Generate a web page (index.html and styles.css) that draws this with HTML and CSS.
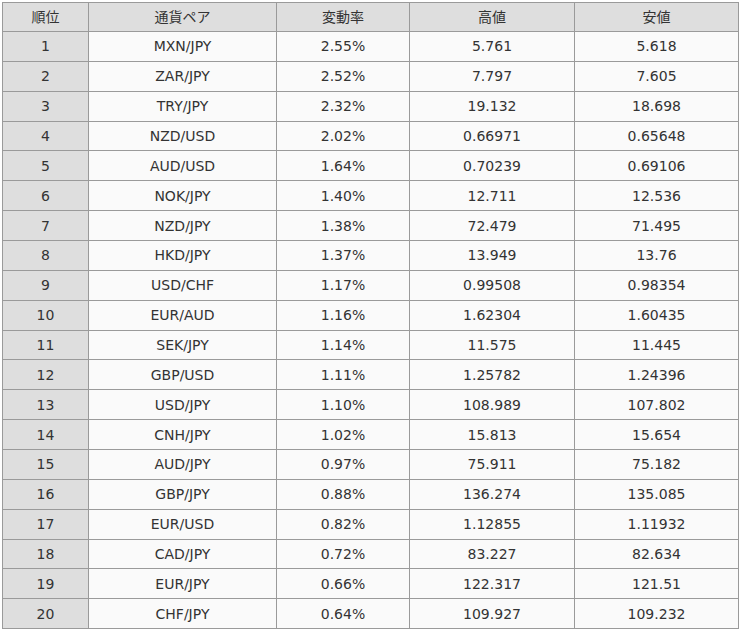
FILE: index.html
```html
<!DOCTYPE html>
<html lang="ja">
<head>
<meta charset="utf-8">
<link rel="stylesheet" href="styles.css">
</head>
<body>
<table class="rank">
<colgroup>
<col class="c1"><col class="c2"><col class="c3"><col class="c4"><col class="c5">
</colgroup>
<thead>
<tr><th>順位</th><th>通貨ペア</th><th>変動率</th><th>高値</th><th>安値</th></tr>
</thead>
<tbody>
<tr><th>1</th><td>MXN/JPY</td><td>2.55%</td><td>5.761</td><td>5.618</td></tr>
<tr><th>2</th><td>ZAR/JPY</td><td>2.52%</td><td>7.797</td><td>7.605</td></tr>
<tr><th>3</th><td>TRY/JPY</td><td>2.32%</td><td>19.132</td><td>18.698</td></tr>
<tr><th>4</th><td>NZD/USD</td><td>2.02%</td><td>0.66971</td><td>0.65648</td></tr>
<tr><th>5</th><td>AUD/USD</td><td>1.64%</td><td>0.70239</td><td>0.69106</td></tr>
<tr><th>6</th><td>NOK/JPY</td><td>1.40%</td><td>12.711</td><td>12.536</td></tr>
<tr><th>7</th><td>NZD/JPY</td><td>1.38%</td><td>72.479</td><td>71.495</td></tr>
<tr><th>8</th><td>HKD/JPY</td><td>1.37%</td><td>13.949</td><td>13.76</td></tr>
<tr><th>9</th><td>USD/CHF</td><td>1.17%</td><td>0.99508</td><td>0.98354</td></tr>
<tr><th>10</th><td>EUR/AUD</td><td>1.16%</td><td>1.62304</td><td>1.60435</td></tr>
<tr><th>11</th><td>SEK/JPY</td><td>1.14%</td><td>11.575</td><td>11.445</td></tr>
<tr><th>12</th><td>GBP/USD</td><td>1.11%</td><td>1.25782</td><td>1.24396</td></tr>
<tr><th>13</th><td>USD/JPY</td><td>1.10%</td><td>108.989</td><td>107.802</td></tr>
<tr><th>14</th><td>CNH/JPY</td><td>1.02%</td><td>15.813</td><td>15.654</td></tr>
<tr><th>15</th><td>AUD/JPY</td><td>0.97%</td><td>75.911</td><td>75.182</td></tr>
<tr><th>16</th><td>GBP/JPY</td><td>0.88%</td><td>136.274</td><td>135.085</td></tr>
<tr><th>17</th><td>EUR/USD</td><td>0.82%</td><td>1.12855</td><td>1.11932</td></tr>
<tr><th>18</th><td>CAD/JPY</td><td>0.72%</td><td>83.227</td><td>82.634</td></tr>
<tr><th>19</th><td>EUR/JPY</td><td>0.66%</td><td>122.317</td><td>121.51</td></tr>
<tr><th>20</th><td>CHF/JPY</td><td>0.64%</td><td>109.927</td><td>109.232</td></tr>
</tbody>
</table>
</body>
</html>
```

FILE: styles.css
```css
html, body {
  margin: 0;
  padding: 0;
  background: #ffffff;
}
body {
  padding: 2px 0 0 2px;
  font-family: "DejaVu Sans", "Noto Sans CJK JP", sans-serif;
  font-size: 14px;
  color: #333333;
}
.rank {
  border-collapse: collapse;
  table-layout: fixed;
  width: 736px;
}
.c1 { width: 86px; }
.c2 { width: 188px; }
.c3 { width: 133px; }
.c4 { width: 165px; }
.c5 { width: 164px; }
.rank th,
.rank td {
  border: 1px solid #9a9a9a;
  text-align: center;
  font-weight: normal;
  padding: 0;
  height: 28.86px;
  line-height: 16px;
}
.rank thead th {
  background: #dedede;
  height: 28px;
}
.rank tbody th {
  background: #dedede;
}
.rank tbody td {
  background: #fafafa;
}
```
